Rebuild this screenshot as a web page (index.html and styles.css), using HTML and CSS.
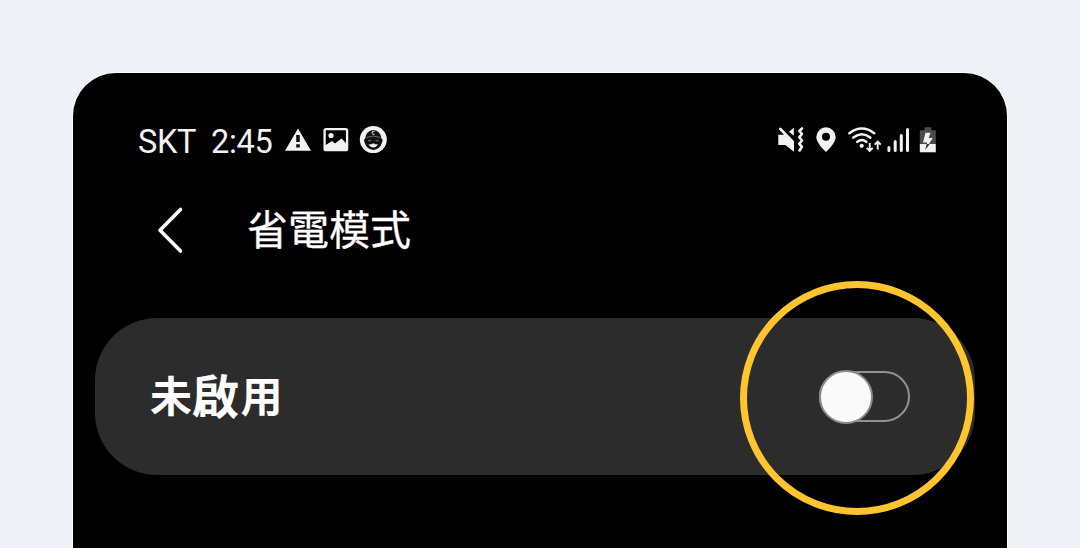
FILE: index.html
```html
<!DOCTYPE html>
<html lang="zh-Hant">
<head>
<meta charset="utf-8">
<title>省電模式</title>
<link rel="stylesheet" href="styles.css">
</head>
<body>
<main class="phone">
  <header class="status">
    <div class="status-left">
      <span class="carrier">SKT</span><span class="time">2:45</span>
      <svg class="notifications" width="105" height="30" viewBox="284 125 105 30">
        <path d="M298 128.500L311 150.800H285Z" fill="#f2f2f2"/>
        <path d="M296.200 135h3.600v7h-3.600zM296.200 144.300h3.600v3.200h-3.600z" fill="#111"/>
        <rect x="324.600" y="129.200" width="22.500" height="21" rx="1.500" fill="none" stroke="#f2f2f2" stroke-width="2.300"/>
        <circle cx="331" cy="135.500" r="2.600" fill="#f2f2f2"/>
        <path d="M325 145.500L332 141L335 143.500L341.500 138.500L347 144V150H325Z" fill="#f2f2f2"/>
        <circle cx="373.300" cy="139.600" r="13.500" fill="#f2f2f2"/>
        <path d="M365.200 138.500Q366 130.500 373.300 130Q380.600 130.500 381.400 138.500Q383.300 139 382 142.500Q380 149.500 373.300 150Q366.600 149.500 364.600 142.500Q363.300 139 365.200 138.500Z" fill="#111"/>
        <path d="M366.500 137.500Q373.300 134.500 380.100 137.500" fill="none" stroke="#777" stroke-width=".9"/>
        <path d="M374.600 131.300Q371.800 130.800 372 133Q372.200 134.800 374.600 134.300" fill="none" stroke="#ddd" stroke-width="1"/>
        <path d="M368 140.700H371M378.600 140.700H375.600M372 143.500H374.600" stroke="#777" stroke-width="1"/>
        <path d="M368.400 144.500Q373.300 143.600 378.200 144.500Q373.300 150.500 368.400 144.500Z" fill="#f2f2f2"/>
      </svg>
    </div>
    <svg class="indicators" width="162" height="30" viewBox="777 125 162 30">
      <path d="M778.300 134.800H785.500L794 143V151.800L785.300 144.900H778.300Z" fill="#f2f2f2"/>
      <path d="M780.300 129L793 142" stroke="#f2f2f2" stroke-width="2.600" stroke-linecap="round"/>
      <path d="M793.800 127.800V135.800L789 131.700Z" fill="#f2f2f2"/>
      <path d="M802 128.500L799.300 131L802 134L799.300 137.200L802 140.500L799.300 143.800L802 146.800L799.500 150.500" fill="none" stroke="#f2f2f2" stroke-width="2.600" stroke-linecap="round" stroke-linejoin="round"/>
      <path fill-rule="evenodd" d="M826 127.300A9.700 9.700 0 0 1 835.700 137C835.700 142.500 829 149 826 152C823 149 816.300 142.500 816.300 137A9.700 9.700 0 0 1 826 127.300ZM826 132.800A4 4 0 1 0 826 140.800A4 4 0 1 0 826 132.800Z" fill="#f2f2f2"/>
      <g fill="none" stroke="#f2f2f2" stroke-width="2.500" stroke-linecap="round">
        <path d="M849.400 133.200Q861.800 123.800 874.200 133.200"/>
        <path d="M853.300 137.600Q861.800 130.800 870.300 137.600"/>
        <path d="M857.200 141.900Q861.800 138.200 866.400 141.900"/>
      </g>
      <circle cx="861.700" cy="145.800" r="2.100" fill="#f2f2f2"/>
      <path d="M869.700 143V150.500M866.700 147.800L869.700 150.800L872.700 147.800M877.700 149.500V142M874.700 144.700L877.700 141.700L880.700 144.700" fill="none" stroke="#f2f2f2" stroke-width="1.900"/>
      <path d="M888.900 147.500V150.500M895.200 141.500V150.500M901.300 135.500V150.500M907.500 129.500V150.500" stroke="#f2f2f2" stroke-width="3" stroke-linecap="round"/>
      <path d="M924.500 127.300H931.500V130.300H935.800V144H919.800V130.300H924.500Z" fill="#4b4b4b"/>
      <path d="M919.800 144H935.800V152.300H919.800Z" fill="#f2f2f2"/>
      <path d="M925.500 132.800H930.500L928.700 138H932.700L925.500 149.500L927.200 142.500H923Z" fill="#f2f2f2"/>
      <path d="M926.600 144H929.700L925.300 150Z" fill="#333"/>
    </svg>
  </header>
  <div class="title-row">
    <svg class="back" width="28" height="48" viewBox="156 206 28 48"><path d="M180.500 209.500L160 230.300L180.500 251" fill="none" stroke="#fff" stroke-width="3.600" stroke-linecap="round" stroke-linejoin="round"/></svg>
    <h1 class="title">省電模式</h1>
  </div>
  <section class="card">
    <div class="label">未<span class="label-strong">啟</span>用</div>
    <div class="switch"><div class="knob"></div></div>
    <div class="highlight"></div>
  </section>
</main>
</body>
</html>
```
FILE: styles.css
```css
* { box-sizing: border-box; }
body {
  margin: 0;
  height: 548px;
  overflow: hidden;
  background: #eef2f6;
  padding: 73px 73px 0;
  font-family: Roboto, "Noto Sans CJK TC", sans-serif;
}
.phone {
  height: 475px;
  background: #000;
  border-radius: 43px 43px 0 0;
  box-shadow: 0 0 0 1px #fbfcfc;
  color: #fff;
}
.status {
  display: flex;
  justify-content: space-between;
  padding: 52px 68px 0 65px;
  height: 82px;
}
.status-left {
  display: flex;
  color: #f2f2f2;
  font-size: 32.5px;
  letter-spacing: -.3px;
  line-height: 34px;
}
.carrier { width: 73px; }
.time { width: 73px; }
.notifications, .indicators, .back { display: block; flex: none; }
.title-row { display: flex; padding: 51px 0 0 83px; height: 163px; }
.title {
  margin: 0 0 0 63px;
  font-size: 41px;
  line-height: 50px;
  font-weight: 400;
  -webkit-text-stroke: .3px #fff;
}
.card {
  position: relative;
  display: flex;
  align-items: center;
  justify-content: space-between;
  margin: 0 32px 0 21.5px;
  padding: 0 65px 0 55.5px;
  height: 157px;
  border-radius: 62px;
  background: #2c2c2c;
}
.label {
  display: flex;
  align-items: center;
  padding-top: 3px;
  font-size: 42px;
  line-height: 60px;
  font-weight: 700;
}
.label-strong { margin-right: 1.5px; font-size: 47px; }
.switch {
  width: 91px;
  height: 51px;
  border: 2px solid #929292;
  border-radius: 26px;
}
.knob {
  width: 54px;
  height: 54px;
  margin: -3.5px 0 0 -2.5px;
  border: 2px solid #8c8c8c;
  border-radius: 50%;
  background: #fafafa;
}
.highlight {
  position: absolute;
  top: -37.500px;
  right: 1px;
  width: 234px;
  height: 234px;
  border: 7.500px solid #ffc42e;
  border-radius: 50%;
}
```
